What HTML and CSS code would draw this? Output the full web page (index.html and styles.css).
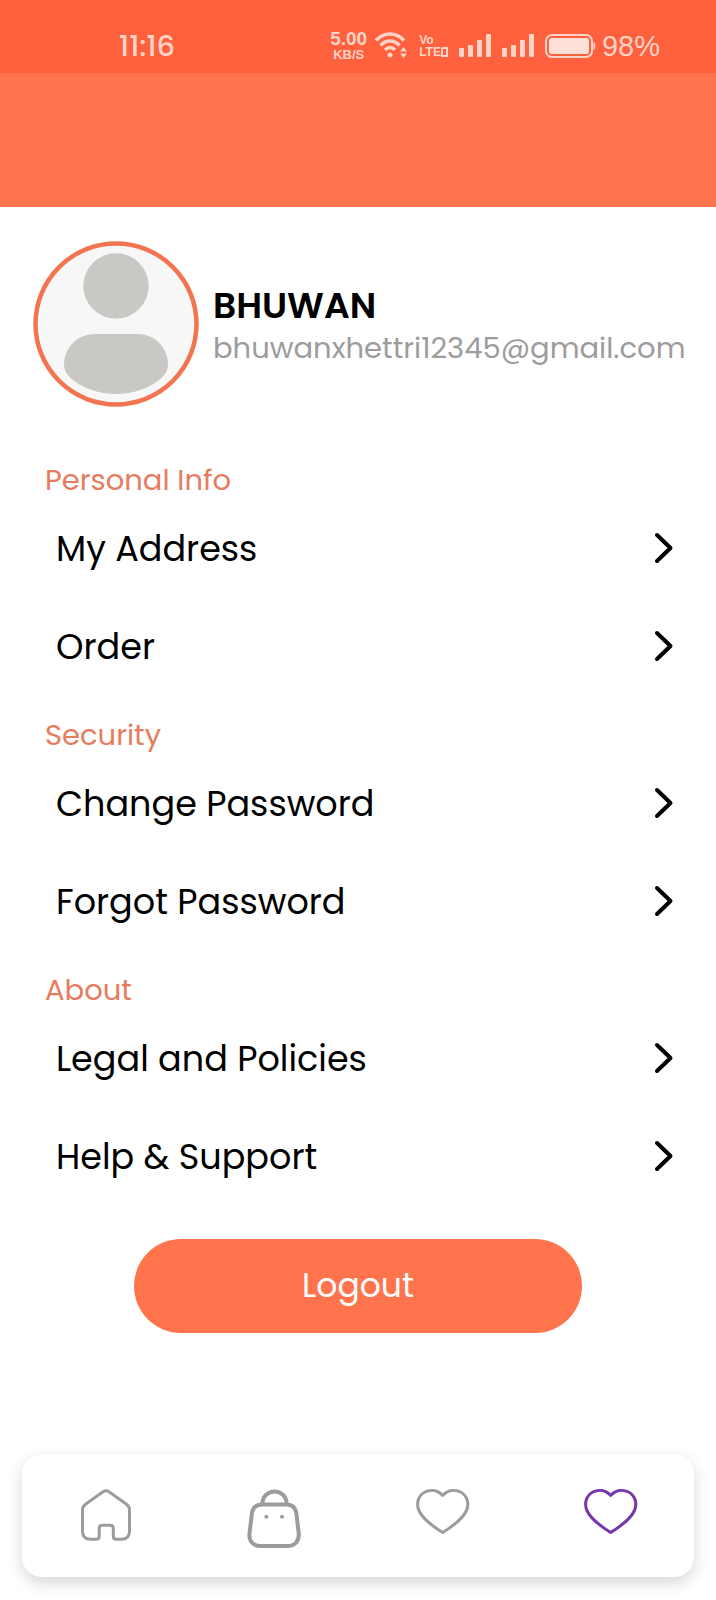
FILE: index.html
```html
<!DOCTYPE html>
<html lang="en">
<head>
    <meta charset="UTF-8">
    <meta name="viewport" content="width=device-width, initial-scale=1.0">
    <title>Profile</title>
    <link rel="stylesheet" href="styles.css">
</head>
<body>
    <div class="status-bar">
        <span class="time">11:16</span>
        <div class="status-icons">
            <div class="speed">
                <span class="speed-value">5.00</span>
                <span class="speed-unit">KB/S</span>
            </div>
            <svg class="wifi" width="34" height="28" viewBox="0 0 34 28" fill="none" stroke="currentColor" stroke-width="3.500">
                <path d="M2 8.5C10-.2 22-.2 30 8.5"/>
                <path d="M6.500 13.500C12 7.500 20 7.500 25.500 13.500"/>
                <path d="M11 18C14 14.800 18 14.800 21 18"/>
                <circle cx="16" cy="23" r="2.500" fill="currentColor" stroke="none"/>
                <path d="M26 19.500L29.500 15L33 19.500ZM26 21.500L29.500 26L33 21.500Z" fill="currentColor" stroke="none"/>
            </svg>
            <div class="volte">
                <span>Vo</span>
                <span class="lte">LTE<svg width="7" height="10" viewBox="0 0 7 10" fill="none" stroke="currentColor" stroke-width="2"><path d="M1 1H6V9H1V1"/></svg></span>
            </div>
            <svg class="signal" width="32" height="24" viewBox="0 0 32 24" fill="currentColor">
                <rect x="0" y="14" width="5" height="9" rx="1"/>
                <rect x="9" y="11" width="5" height="12" rx="1"/>
                <rect x="18" y="6" width="5" height="17" rx="1"/>
                <rect x="27" y="0" width="5" height="23" rx="1"/>
            </svg>
            <svg class="signal" width="32" height="24" viewBox="0 0 32 24" fill="currentColor">
                <rect x="0" y="14" width="5" height="9" rx="1"/>
                <rect x="9" y="11" width="5" height="12" rx="1"/>
                <rect x="18" y="6" width="5" height="17" rx="1"/>
                <rect x="27" y="0" width="5" height="23" rx="1"/>
            </svg>
            <svg class="battery" width="51" height="24" viewBox="0 0 51 24">
                <rect x="1" y="1" width="46" height="22" rx="6" fill="none" stroke="currentColor" stroke-width="2"/>
                <rect x="4" y="4" width="40" height="16" rx="3" fill="#ffe0d9"/>
                <path d="M48.500 8C51 9 51 15 48.500 16Z" fill="currentColor"/>
            </svg>
            <span class="percent">98%</span>
        </div>
    </div>
    <header class="banner"></header>

    <main>
        <div class="profile">
            <svg class="avatar" width="166" height="166" viewBox="0 0 166 166">
                <circle cx="83" cy="83" r="80.500" fill="#f7f7f7" stroke="#f27550" stroke-width="4.500"/>
                <circle cx="83" cy="45" r="32.700" fill="#c9c8c4"/>
                <path d="M62 93H105C122 93 135 107 135 124C135 138 110 153 83 153C56 153 31 138 31 124C31 107 44 93 62 93Z" fill="#c9c8c4"/>
            </svg>
            <div class="profile-text">
                <h1>BHUWAN</h1>
                <p>bhuwanxhettri12345@gmail.com</p>
            </div>
        </div>

        <section class="group">
            <h2>Personal Info</h2>
            <a href="#" class="row">My Address
                <svg class="chevron" width="20" height="32" viewBox="0 0 20 32"><path d="M3 3L16.500 16L3 29"/></svg>
            </a>
            <a href="#" class="row">Order
                <svg class="chevron" width="20" height="32" viewBox="0 0 20 32"><path d="M3 3L16.500 16L3 29"/></svg>
            </a>
        </section>

        <section class="group">
            <h2>Security</h2>
            <a href="#" class="row">Change Password
                <svg class="chevron" width="20" height="32" viewBox="0 0 20 32"><path d="M3 3L16.500 16L3 29"/></svg>
            </a>
            <a href="#" class="row">Forgot Password
                <svg class="chevron" width="20" height="32" viewBox="0 0 20 32"><path d="M3 3L16.500 16L3 29"/></svg>
            </a>
        </section>

        <section class="group">
            <h2>About</h2>
            <a href="#" class="row">Legal and Policies
                <svg class="chevron" width="20" height="32" viewBox="0 0 20 32"><path d="M3 3L16.500 16L3 29"/></svg>
            </a>
            <a href="#" class="row">Help &amp; Support
                <svg class="chevron" width="20" height="32" viewBox="0 0 20 32"><path d="M3 3L16.500 16L3 29"/></svg>
            </a>
        </section>

        <button type="button" class="logout">Logout</button>
    </main>

    <nav class="bottom-nav">
        <a href="#" aria-label="Home">
            <svg width="68" height="68" viewBox="0 0 68 68" stroke-width="3">
                <path d="M31 9.700Q34 7.700 37 9.700L54.500 22.200Q57.500 24.300 57.500 28V49.200Q57.500 57.200 49.500 57.200H44.300Q41.300 57.200 41.300 54.200V46.200Q41.300 43.200 38.300 43.200H30.200Q27.200 43.200 27.200 46.200V54.200Q27.200 57.200 24.200 57.200H18.500Q10.500 57.200 10.500 49.200V28Q10.500 24.300 13.500 22.200Z"/>
            </svg>
        </a>
        <a href="#" aria-label="Cart">
            <svg width="68" height="68" viewBox="0 0 68 68" stroke-width="4">
                <path d="M22.500 22.500H46.500C52.500 22.500 55.500 25.500 56.300 31L58.700 51C59.500 59 55 64 47.500 64H20.500C13 64 8.700 59 9.500 51L12 31C12.800 25.500 16 22.500 22.500 22.500Z"/>
                <path d="M22.300 22.500C22.300 5.200 46.700 5.200 46.700 22.500"/>
                <circle cx="26.300" cy="34.800" r="2" fill="currentColor" stroke="none"/>
                <circle cx="42" cy="34.800" r="2" fill="currentColor" stroke="none"/>
            </svg>
        </a>
        <a href="#" aria-label="Wishlist">
            <svg width="68" height="68" viewBox="0 0 68 68" stroke-width="3">
                <path d="M34.700 13.500C40 7.800 47 7.300 52.500 10C59.500 13.700 61.300 21.500 58.500 28.500C55 36 46 43.500 34.700 50.500C23.400 43.500 14.400 36 10.900 28.500C8.100 21.500 9.900 13.700 16.900 10C22.400 7.300 29.400 7.800 34.700 13.500Z"/>
            </svg>
        </a>
        <a href="#" class="active" aria-label="Profile">
            <svg width="68" height="68" viewBox="0 0 68 68" stroke-width="3">
                <path d="M34.700 13.500C40 7.800 47 7.300 52.500 10C59.500 13.700 61.300 21.500 58.500 28.500C55 36 46 43.500 34.700 50.500C23.400 43.500 14.400 36 10.900 28.500C8.100 21.500 9.900 13.700 16.900 10C22.400 7.300 29.400 7.800 34.700 13.500Z"/>
            </svg>
        </a>
    </nav>
</body>
</html>
```

FILE: styles.css
```css
* {
    box-sizing: border-box;
}
body {
    font-family: Poppins, Inter, sans-serif;
    margin: 0;
    min-height: 100vh;
    display: flex;
    flex-direction: column;
    background-color: #fff;
    color: #000;
}
h1, h2, p {
    margin: 0;
}
a {
    color: inherit;
    text-decoration: none;
}

/* status bar */
.status-bar {
    display: flex;
    justify-content: space-between;
    align-items: center;
    height: 73px;
    padding: 18px 56px 0 119px;
    background-color: #ff603d;
    color: #ffd3c5;
    font-family: "Liberation Sans", Arial, sans-serif;
}
.time, .percent {
    font-size: 29px;
    line-height: 32px;
}
.time {
    font-family: Poppins, Inter, sans-serif;
    font-weight: 500;
}
.percent {
    margin-left: -5px;
}
.status-icons {
    display: flex;
    align-items: center;
    gap: 11px;
}
.speed {
    display: flex;
    flex-direction: column;
    align-items: center;
    font-weight: bold;
}
.speed-value {
    font-size: 19px;
    line-height: 18px;
}
.speed-unit {
    font-size: 13px;
    line-height: 13px;
}
.wifi {
    margin-left: -4px;
}
.volte {
    display: flex;
    flex-direction: column;
    font-size: 12px;
    line-height: 12px;
    font-weight: bold;
}
.lte {
    display: flex;
    align-items: center;
}

.banner {
    height: 134px;
    background-color: #ff744c;
}

/* profile */
.profile {
    display: flex;
    align-items: center;
    gap: 14px;
    padding: 34px 20px 33px 33px;
}
.avatar {
    flex-shrink: 0;
}
.profile-text {
    padding-top: 3px;
}
.profile h1 {
    font-size: 36px;
    line-height: 44px;
    font-weight: 600;
}
.profile p {
    font-size: 29px;
    line-height: 40px;
    color: #9c9c9c;
}

/* menu */
.group h2 {
    padding: 22px 45px 0;
    font-size: 29px;
    line-height: 37px;
    font-weight: 400;
    color: #e67c5e;
}
.row {
    display: flex;
    justify-content: space-between;
    align-items: center;
    height: 98px;
    padding: 0 42px 0 56px;
    font-size: 35px;
}
.chevron {
    fill: none;
    stroke: #000;
    stroke-width: 4;
    stroke-linecap: round;
    stroke-linejoin: round;
}
.logout {
    display: block;
    width: 448px;
    max-width: 80%;
    height: 94px;
    margin: 34px auto;
    border: none;
    border-radius: 47px;
    background-color: #ff744c;
    color: #fff;
    font-family: inherit;
    font-size: 33px;
    cursor: pointer;
}

/* bottom navigation */
.bottom-nav {
    display: flex;
    height: 123px;
    margin: auto 22px 23px;
    border-radius: 20px;
    background-color: #fff;
    box-shadow: 0 6px 16px rgba(0, 0, 0, 0.16);
    color: #9c9c9c;
}
.bottom-nav a {
    flex: 1;
    display: flex;
    justify-content: center;
    align-items: center;
}
.bottom-nav svg {
    fill: none;
    stroke: currentColor;
    stroke-linejoin: round;
}
.bottom-nav .active {
    color: #7636ad;
}
```
